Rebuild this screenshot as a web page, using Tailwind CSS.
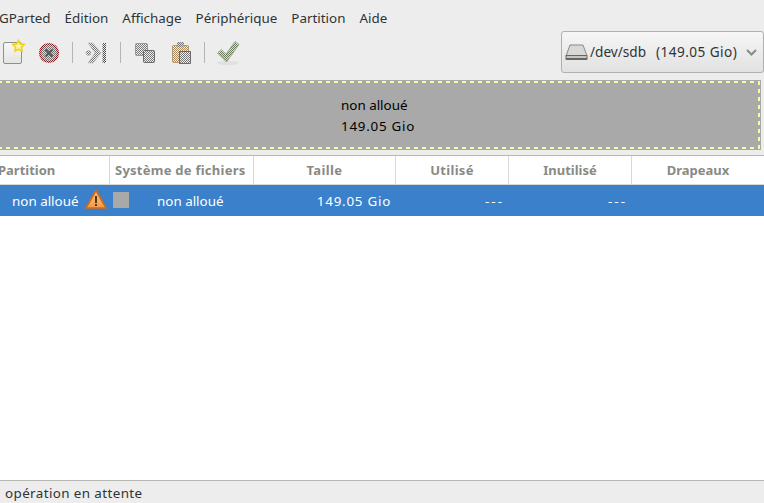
<!DOCTYPE html>
<html><head><meta charset="utf-8"><script src="https://cdn.jsdelivr.net/npm/@tailwindcss/browser@4"></script></head>
<body class="w-[764px] h-[503px] overflow-hidden bg-[#ededed] font-['Noto_Sans',sans-serif] text-[13.4px] text-[#2e3436]">
<svg width="0" height="0" class="absolute"><defs>
<pattern id="dg" width="2" height="2" patternUnits="userSpaceOnUse"><rect width="2" height="2" fill="#efefef"/><rect width="1" height="1" fill="#777"/><rect x="1" y="1" width="1" height="1" fill="#777"/></pattern>
<pattern id="dl" width="2" height="2" patternUnits="userSpaceOnUse"><rect width="2" height="2" fill="#ededed"/><rect width="1" height="1" fill="#4c4c4c"/><rect x="1" y="1" width="1" height="1" fill="#4c4c4c"/></pattern>
<pattern id="dr" width="2" height="2" patternUnits="userSpaceOnUse"><rect width="2" height="2" fill="#c9c9c9"/><rect width="1" height="1" fill="#8f1c22"/><rect x="1" y="1" width="1" height="1" fill="#8f1c22"/></pattern>
<pattern id="dk" width="2" height="2" patternUnits="userSpaceOnUse"><rect width="2" height="2" fill="#d8d8d8"/><rect width="1" height="1" fill="#777"/><rect x="1" y="1" width="1" height="1" fill="#777"/></pattern>
<pattern id="dc" width="2" height="2" patternUnits="userSpaceOnUse"><rect width="2" height="2" fill="#eeeeee"/><rect width="1" height="1" fill="#a98a5c"/><rect x="1" y="1" width="1" height="1" fill="#a98a5c"/></pattern>
<pattern id="dv" width="2" height="2" patternUnits="userSpaceOnUse"><rect width="2" height="2" fill="#d9ddd2"/><rect width="1" height="1" fill="#6b7d5a"/><rect x="1" y="1" width="1" height="1" fill="#6b7d5a"/></pattern>
<linearGradient id="wg" x1="0" y1="0" x2="0" y2="1"><stop offset="0" stop-color="#fcc48c"/><stop offset="1" stop-color="#f49a46"/></linearGradient>
<linearGradient id="dd" x1="0" y1="0" x2="0" y2="1"><stop offset="0" stop-color="#f6f6f4"/><stop offset="1" stop-color="#e4e4e1"/></linearGradient>
</defs></svg>
<div class="flex flex-col h-full">
  <div class="h-[36px] flex items-center -ml-[1px] shrink-0">
    <span>GParted</span><span class="ml-[14px]">Édition</span><span class="ml-[14px]">Affichage</span><span class="ml-[14px]">Périphérique</span><span class="ml-[14px]">Partition</span><span class="ml-[14px]">Aide</span>
  </div>
  <div class="h-[44px] shrink-0 relative">
    <svg width="250" height="34" viewBox="0 0 250 34" class="block">
      <rect x="3.500" y="6.500" width="18" height="21" rx="1.500" fill="url(#dd)" stroke="#8f8f8b"/>
      <path d="M18.500 4.500l1.800 3.400 3.800.6-2.700 2.700.6 3.800-3.500-1.800-3.500 1.800.6-3.800-2.700-2.700 3.800-.6z" fill="#fff6a8" stroke="#efd21c" stroke-width="1.600"/>
      <circle cx="49" cy="17" r="9" fill="url(#dk)" stroke="url(#dr)" stroke-width="2.200"/>
      <path d="M45.500 13.500l7 7m0-7l-7 7" stroke="#5a5a5a" stroke-width="2.200"/>
      <rect x="72" y="6" width="1" height="21" fill="#b5b5b3"/>
      <path d="M88 7h5l8 10-8 10h-5l7-10z" fill="url(#dg)" stroke="#bbb" stroke-width=".6"/>
      <circle cx="88.500" cy="17" r="2.500" fill="url(#dg)" stroke="#aaa" stroke-width=".5"/>
      <rect x="102.500" y="7" width="3.500" height="20" fill="url(#dl)"/>
      <rect x="120" y="6" width="1" height="21" fill="#b5b5b3"/>
      <rect x="135.500" y="7.500" width="12" height="12" rx="1" fill="url(#dg)" stroke="#8a8a8a" stroke-width=".8"/>
      <rect x="143.500" y="14.500" width="11" height="12" rx="1" fill="url(#dg)" stroke="#555" stroke-width=".8"/>
      <rect x="172.500" y="9.500" width="16" height="17" rx="1" fill="url(#dc)" stroke="#a98a5c" stroke-width=".8"/>
      <rect x="177" y="6" width="7" height="5" rx="1" fill="url(#dk)"/>
      <rect x="179.500" y="15.500" width="11" height="12" fill="url(#dg)" stroke="#555" stroke-width=".8"/>
      <rect x="204" y="6" width="1" height="21" fill="#b5b5b3"/>
      <ellipse cx="228" cy="27" rx="11" ry="2" fill="#e0e0de"/>
      <path d="M217.500 17l4-3.500 4.500 4.500 9-12.500 4 3-12.500 17.500z" fill="url(#dv)" stroke="#a3a89c"/>
    </svg>
    <div class="absolute right-0 top-[-5px] w-[203px] h-[42px] rounded-[3px] border border-[#b0b0ae] bg-gradient-to-b from-[#f6f6f6] to-[#e2e2e2] flex items-center pl-[3px] text-[13.6px] whitespace-pre">
      <svg width="23" height="19" viewBox="0 0 23 19" class="shrink-0"><path d="M5 2h13l4 11H1z" fill="#d8d8d5" stroke="#8a8a88"/><rect x=".5" y="12" width="22" height="5" rx="1" fill="#666"/><rect x="1.500" y="13" width="20" height="2" fill="#c4c4c2"/></svg>
      <span class="ml-[2px] w-[66px] shrink-0">/dev/sdb</span>
      <span class="tracking-[.45px] w-[90px] shrink-0">(149.05 Gio)</span>
      <svg width="11" height="7" viewBox="0 0 11 7" class="shrink-0"><path d="M1 1l4.500 4.500L10 1" fill="none" stroke="#8a8a88" stroke-width="2"/></svg>
    </div>
  </div>
  <div class="relative h-[70px] shrink-0 -ml-[4px] mr-[3px] bg-[#a9a9a9] flex flex-col items-start justify-center text-black leading-[21px] pl-[345px] pt-[2px]">
    <span>non alloué</span><span class="tracking-[.75px]">149.05 Gio</span>
    <svg class="absolute inset-0" width="100%" height="100%"><rect x="2" y="2" width="761" height="66" fill="none" stroke="#f8f8a8" stroke-width="2" stroke-dasharray="4 4"/></svg>
  </div>
  <div class="h-[5px] shrink-0"></div>
  <div class="flex-1 bg-white border-t border-[#b6b6b3] flex flex-col min-h-0">
    <div class="h-[29px] shrink-0 flex items-center font-bold text-[13px] text-[#888a85] border-b border-[#d8d8d6]">
      <div class="w-[112px] h-full flex items-center border-r border-[#d8d8d6] ml-[-2px] pt-[2px] shrink-0"><span>Partition</span></div>
      <div class="w-[144px] h-full flex items-center border-r border-[#d8d8d6] pl-[5px] pt-[2px] shrink-0"><span class="tracking-[.25px]">Système de fichiers</span></div>
      <div class="w-[142px] h-full flex items-center justify-center border-r border-[#d8d8d6] pt-[2px] shrink-0 tracking-[.4px]">Taille</div>
      <div class="w-[113px] h-full flex items-center justify-center border-r border-[#d8d8d6] pt-[2px] shrink-0 tracking-[.3px]">Utilisé</div>
      <div class="w-[123px] h-full flex items-center justify-center border-r border-[#d8d8d6] pt-[2px] shrink-0">Inutilisé</div>
      <div class="flex-1 h-full flex items-center justify-center pt-[2px]">Drapeaux</div>
    </div>
    <div class="h-[31px] shrink-0 bg-[#3a80cb] text-white flex items-center pt-[2px] whitespace-nowrap">
      <span class="ml-[12px] w-[73px] shrink-0">non alloué</span>
      <svg width="22" height="21" viewBox="0 0 22 21" class="shrink-0 mt-[-5px]"><path d="M11 1.500L21 19H1z" fill="url(#wg)" stroke="#d56a14" stroke-width="1.700" stroke-linejoin="round"/><rect x="10" y="7" width="2" height="7" fill="#5a3512"/><rect x="10" y="15" width="2" height="2" fill="#5a3512"/></svg>
      <span class="ml-[6px] w-[16px] h-[16px] mt-[-3px] bg-[#a9a9a9] shrink-0"></span>
      <span class="ml-[28px] w-[160px] shrink-0">non alloué</span>
      <span class="w-[74px] flex justify-end shrink-0 tracking-[.75px]">149.05 Gio</span>
      <span class="w-[113px] text-right shrink-0 tracking-[2px]">---</span>
      <span class="w-[123px] text-right shrink-0 tracking-[2px]">---</span>
    </div>
    <div class="flex-1"></div>
  </div>
  <div class="h-[23px] shrink-0 border-t border-[#b6b6b3] flex items-center pl-[5px] pt-[3px] tracking-[.4px]">opération en attente</div>
</div>
</body></html>
